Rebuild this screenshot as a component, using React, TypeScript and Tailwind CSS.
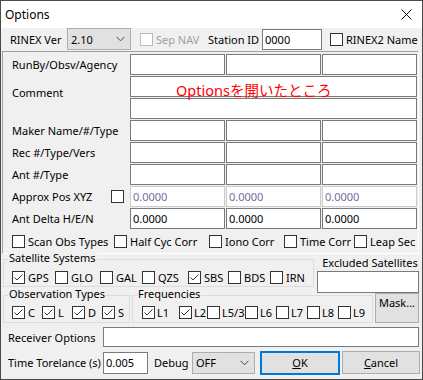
import React from "react";

function Box({ checked = false, disabled = false }: { checked?: boolean; disabled?: boolean }) {
  return (
    <span
      className={
        disabled
          ? "w-[13px] h-[13px] border border-[#bcbcbc] bg-white flex items-center justify-center shrink-0"
          : "w-[13px] h-[13px] border border-[#333333] bg-white flex items-center justify-center shrink-0"
      }
    >
      {checked && (
        <svg width="11" height="11" viewBox="0 0 11 11">
          <path d="M1.5 5.5 L4 8 L9.5 2.5" stroke="#333" fill="none" strokeWidth="1" />
        </svg>
      )}
    </span>
  );
}

function CB({ label, checked = false, disabled = false, className = "", tight = false }: { label: string; checked?: boolean; disabled?: boolean; className?: string; tight?: boolean }) {
  return (
    <div className={(tight ? "flex items-center gap-[2px] shrink-0 " : "flex items-center gap-[3px] shrink-0 ") + className}>
      <Box checked={checked} disabled={disabled} />
      <span className={disabled ? "text-[#a0a0a0] leading-none" : "leading-none"}>{label}</span>
    </div>
  );
}

function Field({ value = "", disabled = false, className = "" }: { value?: string; disabled?: boolean; className?: string }) {
  return (
    <div
      className={
        (disabled
          ? "border border-[#cccccc] bg-white text-[#6d6d9d] "
          : "border border-[#7a7a7a] bg-white text-black ") +
        "flex items-center pl-[2px] leading-none shrink-0 " +
        className
      }
    >
      {value}
    </div>
  );
}

function Chevron() {
  return (
    <svg width="9" height="6" viewBox="0 0 9 6">
      <path d="M0.5 0.8 L4.5 4.8 L8.5 0.8" stroke="#444" fill="none" strokeWidth="1" />
    </svg>
  );
}

function Row3({ label, values = ["", "", ""], disabled = false, extra }: { label: string; values?: string[]; disabled?: boolean; extra?: React.ReactNode }) {
  return (
    <div className="flex h-[21px]">
      <div className="w-[127px] pl-[9px] flex items-center">
        <span className="leading-none">{label}</span>
        {extra}
      </div>
      <div className="flex gap-[1px]">
        <Field className="w-[95px] h-[21px]" value={values[0]} disabled={disabled} />
        <Field className="w-[95px] h-[21px]" value={values[1]} disabled={disabled} />
        <Field className="w-[95px] h-[21px]" value={values[2]} disabled={disabled} />
      </div>
    </div>
  );
}

export default function App() {
  return (
    <div className="relative w-[423px] h-[380px] border border-[#4a4a4a] bg-[#f0f0f0] text-[11px] text-black whitespace-nowrap font-['Noto_Sans','Noto_Sans_CJK_JP',sans-serif] flex flex-col overflow-hidden">
      {/* Title bar */}
      <div className="h-[27px] bg-white flex items-center justify-between pl-[4px] pr-[10px] shrink-0">
        <span className="text-[12px] leading-none">Options</span>
        <svg width="11" height="11" viewBox="0 0 11 11">
          <path d="M0.5 0.5 L10.5 10.5 M10.5 0.5 L0.5 10.5" stroke="#111" strokeWidth="1" />
        </svg>
      </div>

      {/* Row 1 */}
      <div className="h-[23px] flex items-start shrink-0">
        <div className="w-[66px] pl-[9px] h-[22px] flex items-center leading-none">RINEX Ver</div>
        <div className="w-[64px] h-[22px] bg-[#e1e1e1] border border-[#adadad] flex items-center justify-between pl-[3px] pr-[5px]">
          <span className="leading-none">2.10</span>
          <Chevron />
        </div>
        <div className="w-[77px] h-[22px] pl-[9px] flex items-center">
          <CB label="Sep NAV" disabled />
        </div>
        <div className="w-[54px] h-[22px] flex items-center leading-none">Station ID</div>
        <Field className="w-[60px] h-[21px] mt-[1px]" value="0000" />
        <div className="h-[22px] pl-[8px] flex items-center">
          <CB label="RINEX2 Name" />
        </div>
      </div>

      {/* Panel */}
      <div className="ml-[1px] w-[417px] h-[203px] border-t border-l border-[#a0a0a0] border-r border-r-white border-b border-b-white shrink-0 flex flex-col pt-[2px]">
        <div className="flex flex-col gap-[1px]">
          <Row3 label="RunBy/Obsv/Agency" />
          <div className="flex h-[43px]">
            <div className="w-[127px] pl-[9px] flex items-start leading-none pt-[11px]">Comment</div>
            <div className="flex flex-col gap-[1px]">
              <Field className="w-[287px] h-[21px]" />
              <Field className="w-[287px] h-[21px]" />
            </div>
          </div>
          <Row3 label="Maker Name/#/Type" />
          <Row3 label="Rec #/Type/Vers" />
          <Row3 label="Ant #/Type" />
          <Row3
            label="Approx Pos XYZ"
            values={["0.0000", "0.0000", "0.0000"]}
            disabled
            extra={<span className="ml-auto mr-[6px]"><Box /></span>}
          />
          <Row3 label="Ant Delta H/E/N" values={["0.0000", "0.0000", "0.0000"]} />
        </div>
        <div className="flex items-center mt-[6px] pl-[9px] h-[13px]">
          <CB label="Scan Obs Types" className="w-[102px]" />
          <CB label="Half Cyc Corr" className="w-[95px]" />
          <CB label="Iono Corr" className="w-[75px]" />
          <CB label="Time Corr" className="w-[70px]" />
          <CB label="Leap Sec" />
        </div>
      </div>

      {/* Satellite systems + excluded */}
      <div className="flex h-[37px] shrink-0">
        <div className="relative ml-[2px] mt-[5px] w-[311px] h-[28px] border border-[#dcdcdc]">
          <span className="absolute left-[4px] -top-[8px] px-[1px] bg-[#f0f0f0] leading-none">Satellite Systems</span>
          <div className="flex items-center h-full pl-[8px] pt-[8px]">
            <CB label="GPS" checked className="w-[43px]" />
            <CB label="GLO" className="w-[45px]" />
            <CB label="GAL" className="w-[42px]" />
            <CB label="QZS" className="w-[46px]" />
            <CB label="SBS" checked className="w-[40px]" />
            <CB label="BDS" className="w-[42px]" />
            <CB label="IRN" />
          </div>
        </div>
        <div className="ml-[3px] flex flex-col items-center">
          <span className="leading-none mt-[3px] ml-[4px]">Excluded Satellites</span>
          <Field className="w-[102px] h-[22px] mt-[3px]" />
        </div>
      </div>

      {/* Observation types + Frequencies + Mask */}
      <div className="flex h-[35px] shrink-0">
        <div className="relative ml-[2px] mt-[4px] w-[127px] h-[28px] border border-[#dcdcdc] shrink-0">
          <span className="absolute left-[4px] -top-[8px] px-[1px] bg-[#f0f0f0] leading-none">Observation Types</span>
          <div className="flex items-center h-full pl-[8px] pt-[6px]">
            <CB label="C" checked className="w-[30px]" />
            <CB label="L" checked className="w-[30px]" />
            <CB label="D" checked className="w-[30px]" />
            <CB label="S" checked />
          </div>
        </div>
        <div className="relative ml-[2px] mt-[4px] w-[241px] h-[28px] border border-[#dcdcdc] shrink-0">
          <span className="absolute left-[4px] -top-[8px] px-[1px] bg-[#f0f0f0] leading-none">Frequencies</span>
          <div className="flex items-center h-full pl-[9px] pt-[6px]">
            <CB tight label="L1" checked className="w-[37px]" />
            <CB tight label="L2" checked className="w-[28px]" />
            <CB tight label="L5/3" className="w-[38px]" />
            <CB tight label="L6" className="w-[31px]" />
            <CB tight label="L7" className="w-[31px]" />
            <CB tight label="L8" className="w-[31px]" />
            <CB tight label="L9" />
          </div>
        </div>
        <div className="ml-[2px] mt-[2px] w-[44px] h-[30px] bg-[#e1e1e1] border border-[#adadad] flex items-start justify-center pt-[3px] leading-none shrink-0">
          Mask...
        </div>
      </div>

      {/* Receiver options */}
      <div className="flex items-center h-[20px] mt-[1px] shrink-0">
        <div className="w-[102px] pl-[7px] leading-none">Receiver Options</div>
        <Field className="w-[316px] h-[20px]" />
      </div>

      {/* Bottom row */}
      <div className="flex items-center h-[23px] mt-[4px] shrink-0">
        <div className="w-[102px] pl-[7px] leading-none">Time Torelance (s)</div>
        <Field className="w-[45px] h-[22px]" value="0.005" />
        <div className="w-[44px] pl-[6px] leading-none">Debug</div>
        <div className="w-[63px] h-[22px] bg-[#e1e1e1] border border-[#adadad] flex items-center justify-between pl-[3px] pr-[5px]">
          <span className="leading-none">OFF</span>
          <Chevron />
        </div>
        <div className="ml-[5px] w-[80px] h-[24px] bg-[#e1e1e1] border-2 border-[#0078d7] flex items-center justify-center leading-none">
          <span><span className="underline">O</span>K</span>
        </div>
        <div className="ml-[2px] w-[78px] h-[23px] bg-[#e1e1e1] border border-[#adadad] flex items-center justify-center leading-none">
          <span><span className="underline">C</span>ancel</span>
        </div>
      </div>

      {/* Red annotation */}
      <div className="absolute left-[175px] top-[82px] text-[14.5px] leading-none text-[#ff0000] font-['Noto_Sans','Noto_Sans_CJK_JP',sans-serif] whitespace-nowrap">
        Optionsを開いたところ
      </div>
    </div>
  );
}
